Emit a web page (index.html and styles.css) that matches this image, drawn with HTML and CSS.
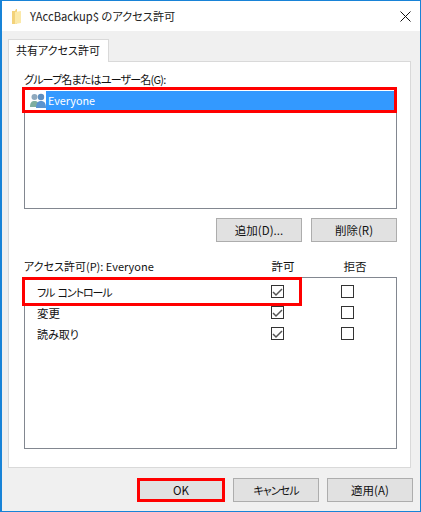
FILE: index.html
```html
<!DOCTYPE html>
<html lang="ja">
<head>
	<meta charset="UTF-8">
	<meta name="viewport" content="width=device-width, initial-scale=1.0">
	<title>YAccBackup$ のアクセス許可</title>
	<link rel="stylesheet" href="styles.css">
</head>
<body>
	<div class="window">
		<div class="titlebar">
			<svg class="folder" width="9" height="15" viewBox="0 0 9 15">
				<path d="M0 2h3l1-2h1v15H0z" fill="#f3d27a"/>
				<path d="M3 3l6-1v12l-6 1z" fill="#fbe9a9"/>
			</svg>
			<span class="title">YAccBackup$ のアクセス許可</span>
			<svg class="close" width="11" height="11" viewBox="0 0 11 11">
				<path d="M.5.5l10 10M10.5.5l-10 10" stroke="#111" stroke-width="1" fill="none"/>
			</svg>
		</div>
		<div class="client">
			<div class="tab">共有アクセス許可</div>
			<div class="panel">
				<div class="label">グループ名またはユーザー名(G):</div>
				<div class="listbox users">
					<div class="user">
						<svg class="user-icon" width="16" height="15" viewBox="0 0 16 15">
							<circle cx="4.5" cy="4" r="3" fill="#8fa9bd"/>
							<path d="M0 14c0-5 2-6 4.500-6s4.500 1 4.500 6z" fill="#7fae9f"/>
							<circle cx="11" cy="4" r="3.200" fill="#5f8fc0"/>
							<path d="M6 15c0-6 2.500-7 5-7s5 1 5 7z" fill="#5b94cf"/>
						</svg>
						<span class="user-name">Everyone</span>
					</div>
					<div class="mark mark-user"></div>
				</div>
				<div class="actions">
					<button>追加(D)...</button>
					<button>削除(R)</button>
				</div>
				<div class="perm-head">
					<span class="perm-title">アクセス許可(P): Everyone</span>
					<span class="perm-col">許可</span>
					<span class="perm-col">拒否</span>
				</div>
				<div class="listbox perms">
					<div class="perm">
						<span class="perm-name kana full">フル コントロール</span>
						<span class="check on"><svg width="11" height="11" viewBox="0 0 11 11"><path d="M1 6l3 3 6-6" stroke="#555" stroke-width="1.500" fill="none"/></svg></span>
						<span class="check"></span>
					</div>
					<div class="perm">
						<span class="perm-name">変更</span>
						<span class="check on"><svg width="11" height="11" viewBox="0 0 11 11"><path d="M1 6l3 3 6-6" stroke="#555" stroke-width="1.500" fill="none"/></svg></span>
						<span class="check"></span>
					</div>
					<div class="perm">
						<span class="perm-name yomi">読み取り</span>
						<span class="check on"><svg width="11" height="11" viewBox="0 0 11 11"><path d="M1 6l3 3 6-6" stroke="#555" stroke-width="1.500" fill="none"/></svg></span>
						<span class="check"></span>
					</div>
					<div class="mark mark-perm"></div>
				</div>
			</div>
			<div class="footer">
				<button class="ok">OK</button>
				<button class="kana">キャンセル</button>
				<button>適用(A)</button>
			</div>
		</div>
	</div>
</body>
</html>
```

FILE: styles.css
```css
body{
	margin: 0;
	font-family: "Noto Sans CJK JP", "Noto Sans", sans-serif;
	font-size: 11px;
	font-feature-settings: "palt";
	color: #111;
}
.window{
	box-sizing: border-box;
	width: 421px;
	height: 512px;
	border: 1px solid #1883d7;
	border-left-width: 2px;
	background-color: #f0f0f0;
	display: flex;
	flex-direction: column;
}
.titlebar{
	height: 30px;
	background-color: #fff;
	display: flex;
	align-items: center;
	padding: 0 9px 0 10px;
}
.folder{
	margin-right: 9px;
}
.title{
	flex: 1;
	font-size: 11.2px;
	color: #222;
}
.client{
	flex: 1;
	padding: 8px 7px 0 6px;
}
.tab{
	box-sizing: border-box;
	width: 101px;
	height: 23px;
	background-color: #fff;
	border: 1px solid #d9d9d9;
	border-bottom: none;
	line-height: 21px;
	padding-left: 7px;
	white-space: nowrap;
	position: relative;
	z-index: 1;
}
.panel{
	box-sizing: border-box;
	width: 403px;
	height: 407px;
	margin-top: -1px;
	background-color: #fff;
	border: 1px solid #d9d9d9;
	padding: 8px 13px 0 15px;
}
.label{
	height: 19px;
	line-height: 18px;
	letter-spacing: -0.8px;
}
.listbox{
	box-sizing: border-box;
	position: relative;
	background-color: #fff;
	border: 1px solid #828790;
}
.users{
	height: 120px;
	padding: 1px 2px 0 5px;
}
.user{
	display: flex;
	align-items: center;
	height: 19px;
}
.user-icon{
	flex: none;
}
.user-name{
	flex: 1;
	height: 19px;
	line-height: 18px;
	padding-left: 2px;
	font-size: 10.8px;
	color: #fff;
	background-color: #3399ff;
}
.mark{
	position: absolute;
	box-sizing: border-box;
	border: 3px solid #ff0000;
}
.mark-user{
	left: -3px;
	top: -3px;
	width: 375px;
	height: 26px;
}
.mark-perm{
	left: -3px;
	top: -1px;
	width: 280px;
	height: 29px;
}
.actions{
	display: flex;
	justify-content: flex-end;
	gap: 9px;
	margin-top: 9px;
}
button{
	box-sizing: border-box;
	width: 86px;
	height: 24px;
	padding: 0;
	background-color: #e1e1e1;
	border: 1px solid #adadad;
	font-family: inherit;
	font-size: 11.5px;
	font-feature-settings: inherit;
	color: #111;
}
.perm-head{
	display: flex;
	gap: 48px;
	height: 17px;
	margin-top: 16px;
	padding-right: 30px;
	line-height: 17px;
}
.perm-title{
	flex: 1;
}
.perm-col{
	width: 24px;
	text-align: center;
	font-size: 11.5px;
}
.perms{
	height: 172px;
	margin-top: 2px;
	padding: 3px 42px 0 12px;
}
.perm{
	display: flex;
	align-items: center;
	gap: 57px;
	height: 21px;
}
.perm-name{
	flex: 1;
	font-size: 11.5px;
}
.yomi{
	font-size: 11px;
}
.kana{
	font-size: 11px;
	letter-spacing: -0.9px;
}
.full{
	letter-spacing: -1.1px;
	word-spacing: 2px;
}
.check{
	box-sizing: border-box;
	width: 13px;
	height: 13px;
	border: 1px solid #333;
	display: flex;
	align-items: center;
	justify-content: center;
}
.footer{
	display: flex;
	justify-content: flex-end;
	gap: 8px;
	margin-top: 10px;
}
.ok{
	width: 88px;
	border: 3px solid #ff0000;
}
```
